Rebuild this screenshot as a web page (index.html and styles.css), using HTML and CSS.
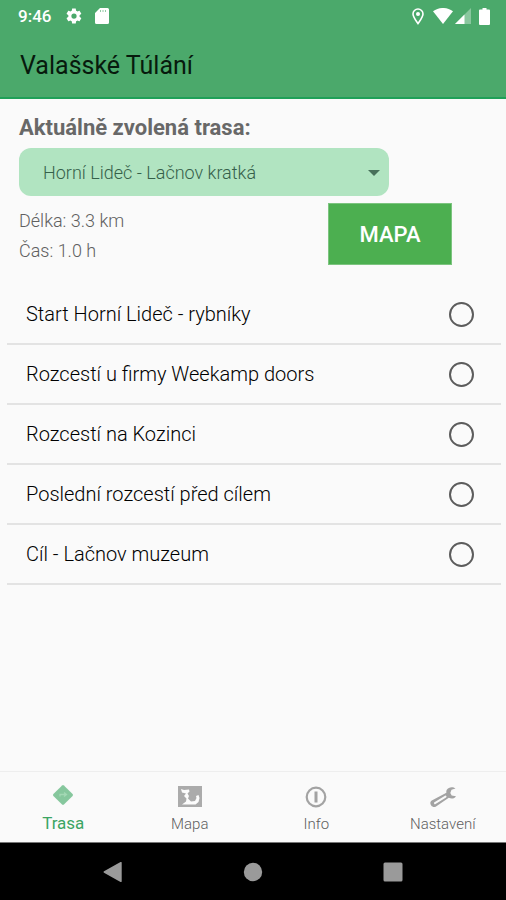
FILE: index.html
```html
<!DOCTYPE html>
<html lang="cs">
<head>
<meta charset="utf-8">
<meta name="viewport" content="width=device-width, initial-scale=1">
<title>Valašské Túlání</title>
<link rel="stylesheet" href="styles.css">
</head>
<body>
<header class="top">
  <div class="status">
    <span class="clock">9:46</span>
    <svg class="status-gear" width="18" height="18" viewBox="0 0 24 24" fill="#fff" aria-hidden="true"><path d="M19.4 13a7.500 7.500 0 0 0 0-2l2.100-1.600c.2-.2.300-.4.100-.7l-2-3.400c-.1-.2-.4-.3-.6-.2l-2.500 1a7 7 0 0 0-1.700-1l-.4-2.600c0-.3-.2-.5-.5-.5h-4c-.3 0-.5.200-.5.500L9 5.100a7 7 0 0 0-1.700 1l-2.500-1c-.2-.1-.5 0-.6.200l-2 3.400c-.1.300 0 .500.100.700L4.500 11a7.500 7.500 0 0 0 0 2l-2.200 1.600c-.1.200-.2.400-.1.700l2 3.400c.1.200.4.300.6.200l2.500-1a7 7 0 0 0 1.700 1l.4 2.600c0 .3.200.5.500.5h4c.3 0 .5-.2.500-.5l.4-2.600a7 7 0 0 0 1.700-1l2.500 1c.2.100.5 0 .6-.2l2-3.400c.2-.3.100-.5-.1-.7zM12 15.500a3.500 3.500 0 1 1 0-7 3.500 3.500 0 0 1 0 7z"/></svg>
    <svg width="14" height="16" viewBox="0 0 14 16" aria-hidden="true"><path fill="#fff" d="M5 0h7.500A1.500 1.500 0 0 1 14 1.500v13a1.500 1.500 0 0 1-1.500 1.500h-11A1.500 1.500 0 0 1 0 14.500V5z"/><path stroke="#4ba96b" stroke-opacity=".6" stroke-width="1" d="M5.500 2v2M8 2v2M10.500 2v2"/></svg>
    <span class="status-right">
      <svg width="12" height="17" viewBox="0 0 12 17" aria-hidden="true"><path fill="none" stroke="#fff" stroke-width="1.600" d="M6 15.500C3.500 12 1 9 1 6a5 5 0 0 1 10 0c0 3-2.500 6-5 9.500z"/><circle cx="6" cy="6" r="2" fill="#fff"/></svg>
      <svg class="wifi" width="20" height="16" viewBox="0 0 20 16" aria-hidden="true"><path fill="#fff" d="M0 3.200C6-1.100 14-1.100 20 3.200L10 16z"/></svg>
      <svg width="16" height="16" viewBox="0 0 16 16" aria-hidden="true"><path fill="#fff" fill-opacity=".35" d="M16 0v16H0z"/><path fill="#fff" d="M9.500 6.500V16H0z"/></svg>
      <svg class="battery" width="11" height="17" viewBox="0 0 11 17" aria-hidden="true"><path fill="#fff" d="M3.500 0h4v1.500H10a1 1 0 0 1 1 1V16a1 1 0 0 1-1 1H1a1 1 0 0 1-1-1V2.500a1 1 0 0 1 1-1h2.500z"/></svg>
    </span>
  </div>
  <h1 class="title">Valašské Túlání</h1>
</header>

<main class="content">
  <section class="route">
    <label class="route-label" for="route">Aktuálně zvolená trasa:</label>
    <div class="picker">
      <select id="route" class="picker-select">
        <option>Horní Lideč - Lačnov kratká</option>
      </select>
      <svg class="picker-arrow" width="12" height="6" viewBox="0 0 12 6" aria-hidden="true"><path fill="#47705a" d="M0 0h12L6 6z"/></svg>
    </div>
    <div class="summary">
      <div class="facts">
        <p class="fact">Délka: 3.3 km</p>
        <p class="fact">Čas: 1.0 h</p>
      </div>
      <button class="map-button" type="button">MAPA</button>
    </div>
  </section>

  <ul class="stops">
    <li><label class="stop"><span>Start Horní Lideč - rybníky</span><input class="stop-radio" type="radio" name="stop1"></label></li>
    <li><label class="stop"><span>Rozcestí u firmy Weekamp doors</span><input class="stop-radio" type="radio" name="stop2"></label></li>
    <li><label class="stop"><span>Rozcestí na Kozinci</span><input class="stop-radio" type="radio" name="stop3"></label></li>
    <li><label class="stop"><span>Poslední rozcestí před cílem</span><input class="stop-radio" type="radio" name="stop4"></label></li>
    <li><label class="stop"><span>Cíl - Lačnov muzeum</span><input class="stop-radio" type="radio" name="stop5"></label></li>
  </ul>
</main>

<nav class="tabs">
  <a class="tab tab-active" href="#trasa">
    <svg width="26" height="24" viewBox="0 0 26 24" aria-hidden="true"><path fill="#86c79d" d="M12.100 1.400a1.300 1.300 0 0 1 1.800 0l8.700 8.700a1.300 1.300 0 0 1 0 1.800l-8.700 8.700a1.300 1.300 0 0 1-1.800 0l-8.700-8.700a1.300 1.300 0 0 1 0-1.800z"/><path fill="none" stroke="#a3d8b4" stroke-width="1.300" d="M10 12.500V10.500h6M14 8.500l2.500 2L14 12.500"/></svg>
    <span>Trasa</span>
  </a>
  <a class="tab" href="#mapa">
    <svg width="26" height="24" viewBox="0 0 26 24" aria-hidden="true"><path fill="#ababab" d="M1 2h24v21H1z"/><path fill="#fcfcfc" d="M4 5l3 1 5-.5.5 2-2 2 1.500 2.500-1 2.500 3 3 4-.5 1.500-3-.5-2 2.500-1 1 3-1 4-3 2.500H5l4-3 .500-3L7 12l2-2.500-4-1z"/></svg>
    <span>Mapa</span>
  </a>
  <a class="tab" href="#info">
    <svg width="26" height="24" viewBox="0 0 26 24" aria-hidden="true"><circle cx="13" cy="13" r="9.300" fill="none" stroke="#a3a3a3" stroke-width="2.200"/><path stroke="#a3a3a3" stroke-width="3" d="M13 7.500v11"/></svg>
    <span>Info</span>
  </a>
  <a class="tab" href="#nastaveni">
    <svg width="26" height="24" viewBox="0 0 26 24" aria-hidden="true"><path fill="#a3a3a3" d="M25.500 4.500c-2.500-2-7-1.700-8.700 1.300-.6 1-.6 2-.4 3L1.800 16.400c-2 1.200-1.800 3.800-.6 5.200 1.100 1.500 3.200 2 4.800 1L18.800 13.800c2.700 1.500 5.800.9 7.200-1.600l-4.300-.6-1.400-2.600 1.200-3.200z"/><path stroke="#fafafa" stroke-width="2" stroke-linecap="round" d="M5 19.200l10.500-6.600"/></svg>
    <span>Nastavení</span>
  </a>
</nav>

<footer class="system">
  <button class="system-button" type="button" aria-label="Zpět"><svg width="20" height="22" viewBox="0 0 20 22"><path fill="#9a9a9a" d="M1 10.300 17.500 1a.8.8 0 0 1 1.200.7v18.600a.8.800 0 0 1-1.200.7L1 11.700a.8.800 0 0 1 0-1.400z"/></svg></button>
  <button class="system-button" type="button" aria-label="Domů"><svg width="20" height="20" viewBox="0 0 20 20"><circle cx="10" cy="10" r="9.200" fill="#9a9a9a"/></svg></button>
  <button class="system-button" type="button" aria-label="Přehled"><svg width="20" height="20" viewBox="0 0 20 20"><rect x=".5" y=".5" width="19" height="19" rx="1.500" fill="#9a9a9a"/></svg></button>
</footer>
</body>
</html>
```

FILE: styles.css
```css
* {
  box-sizing: border-box;
}

body {
  margin: 0;
  min-height: 100vh;
  display: flex;
  flex-direction: column;
  background: #fafafa;
  color: #1c1c1c;
  font-family: Roboto, "Liberation Sans", sans-serif;
}

.top {
  background: #4ba96b;
  border-bottom: 2px solid #1fa058;
}

.status {
  display: flex;
  align-items: center;
  height: 32px;
  padding: 0 16px 0 18px;
  color: #fff;
}

.clock {
  font-size: 17px;
  font-weight: 500;
}

.status-gear {
  margin: 0 12px 0 14px;
}

.status-right {
  display: flex;
  align-items: center;
  margin-left: auto;
}

.wifi {
  margin: 0 2px 0 9px;
}

.battery {
  margin-left: 8px;
}

.title {
  margin: 0;
  padding: 18px 20px 15px;
  color: #071a0d;
  font-size: 25px;
  font-weight: 400;
  line-height: 32px;
}

.content {
  flex: 1;
}

.route {
  display: flex;
  flex-direction: column;
  padding: 17px 19px 0;
}

.route-label {
  color: #686868;
  font-size: 22px;
  font-weight: 700;
  line-height: 24px;
}

.picker {
  position: relative;
  width: 79%;
  margin-top: 8px;
}

.picker-select {
  appearance: none;
  display: block;
  width: 100%;
  height: 48px;
  padding: 0 40px 0 24px;
  border: 0;
  border-radius: 12px;
  background: #b1e4c1;
  color: #35604a;
  font: 300 18px Roboto, "Liberation Sans", sans-serif;
}

.picker-arrow {
  position: absolute;
  top: 22px;
  right: 9px;
  pointer-events: none;
}

.summary {
  display: flex;
  justify-content: space-between;
  padding: 7px 35px 0 0;
}

.facts {
  padding-top: 3px;
}

.fact {
  margin: 0;
  color: #606060;
  font-size: 18px;
  font-weight: 300;
  line-height: 30px;
}

.map-button {
  width: 124px;
  height: 62px;
  border: 1px solid #7cc47f;
  background: #4caf50;
  color: #fff;
  font: 500 22px Roboto, "Liberation Sans", sans-serif;
}

.stops {
  margin: 19px 5px 0 7px;
  padding: 0;
  list-style: none;
}

.stop {
  display: flex;
  align-items: center;
  justify-content: space-between;
  min-height: 60px;
  padding: 0 27px 0 19px;
  border-bottom: 2px solid #e3e3e3;
  color: #000;
  font-size: 20px;
  font-weight: 300;
}

.stop-radio {
  appearance: none;
  width: 25px;
  height: 25px;
  margin: 0;
  border: 2px solid #5c5c5c;
  border-radius: 50%;
}

.stop-radio:checked {
  background: #4caf50;
}

.tabs {
  display: grid;
  grid-template-columns: repeat(4, 1fr);
  height: 71px;
  border-top: 1px solid #eeeeee;
}

.tab {
  display: flex;
  flex-direction: column;
  align-items: center;
  gap: 5px;
  padding-top: 12px;
  color: #606060;
  font-size: 15px;
  font-weight: 300;
  line-height: 22px;
  text-decoration: none;
}

.tab-active {
  gap: 4px;
  color: #3ba563;
  font-size: 17px;
  font-weight: 400;
}

.system {
  display: flex;
  justify-content: center;
  height: 58px;
  border-top: 1px solid #777777;
  background: #000;
}

.system-button {
  display: flex;
  align-items: center;
  justify-content: center;
  width: 140px;
  padding: 0;
  border: 0;
  background: none;
}
```
